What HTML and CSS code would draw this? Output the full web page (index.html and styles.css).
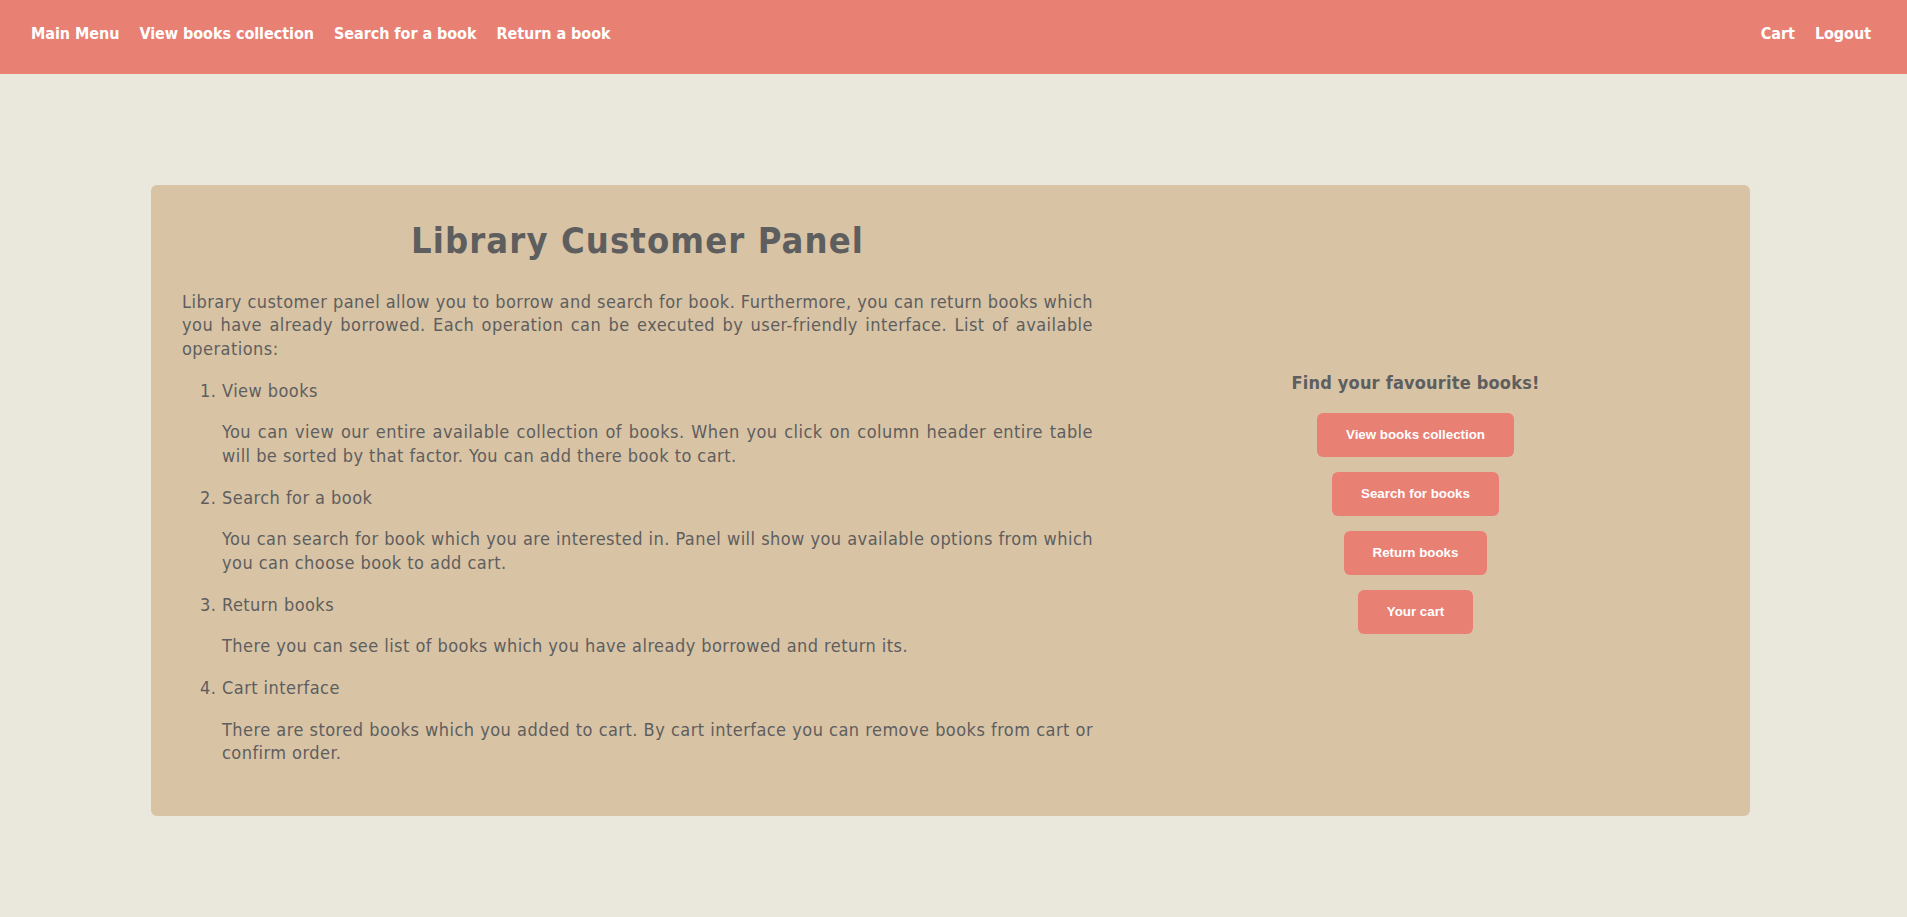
FILE: index.html
```html
<!DOCTYPE html>
<html lang="en">
<head>
<meta charset="utf-8">
<title>Library Customer Panel</title>
<link rel="stylesheet" href="styles.css">
</head>
<body>
<nav class="topnav">
  <ul class="nav-links">
    <li><a href="#">Main Menu</a></li>
    <li><a href="#">View books collection</a></li>
    <li><a href="#">Search for a book</a></li>
    <li><a href="#">Return a book</a></li>
  </ul>
  <ul class="nav-links">
    <li><a href="#">Cart</a></li>
    <li><a href="#">Logout</a></li>
  </ul>
</nav>
<main class="panel">
  <section class="info">
    <h1 class="title">Library Customer Panel</h1>
    <p class="intro">Library customer panel allow you to borrow and search for book. Furthermore, you can return books which you have already borrowed. Each operation can be executed by user-friendly interface. List of available operations:</p>
    <ol class="ops">
      <li>View books
        <p>You can view our entire available collection of books. When you click on column header entire table will be sorted by that factor. You can add there book to cart.</p>
      </li>
      <li>Search for a book
        <p>You can search for book which you are interested in. Panel will show you available options from which you can choose book to add cart.</p>
      </li>
      <li>Return books
        <p>There you can see list of books which you have already borrowed and return its.</p>
      </li>
      <li>Cart interface
        <p>There are stored books which you added to cart. By cart interface you can remove books from cart or confirm order.</p>
      </li>
    </ol>
  </section>
  <aside class="actions">
    <h2 class="actions-title">Find your favourite books!</h2>
    <button class="btn">View books collection</button>
    <button class="btn">Search for books</button>
    <button class="btn">Return books</button>
    <button class="btn">Your cart</button>
  </aside>
</main>
</body>
</html>
```

FILE: styles.css
```css
* { box-sizing: border-box; }

html, body {
  margin: 0;
  padding: 0;
}

body {
  background: #eae7dc;
  color: #5e5e5e;
  font-family: "DejaVu Sans Condensed", "DejaVu Sans", sans-serif;
  font-size: 18px;
  height: 917px;
  overflow: hidden;
}

.topnav {
  height: 74px;
  background: #e98074;
  display: flex;
  align-items: center;
  justify-content: space-between;
  padding: 0 36px 6px 31px;
}

.nav-links {
  list-style: none;
  margin: 0;
  padding: 0;
  display: flex;
  gap: 20px;
}

.nav-links a {
  color: #ffffff;
  text-decoration: none;
  font-weight: bold;
  font-size: 16px;
  line-height: 20px;
  letter-spacing: -0.05px;
  display: block;
}

.panel {
  width: 1599px;
  margin: 111px 0 0 151px;
  background: #d8c3a5;
  border-radius: 6px;
  padding: 34px 31px 32.5px 31px;
  display: grid;
  grid-template-columns: 911px 1fr;
  column-gap: 19px;
}

.info {
  line-height: 23.4px;
  letter-spacing: 0.45px;
}

.title {
  margin: 0 0 27px;
  font-size: 36px;
  line-height: 44px;
  letter-spacing: 1.1px;
  text-align: center;
  font-weight: bold;
}

.intro {
  margin: 0 0 18.4px;
  text-align: justify;
}

.ops {
  margin: 18.4px 0;
  padding-left: 40px;
}

.ops p {
  margin: 18.4px 0;
  text-align: justify;
}

.actions {
  display: flex;
  flex-direction: column;
  align-items: center;
  justify-content: center;
  gap: 15px;
  padding-top: 4px;
}

.actions-title {
  margin: 0 0 4px;
  font-size: 18px;
  line-height: 22px;
  letter-spacing: 0.2px;
  font-weight: bold;
}

.btn {
  background: #e98074;
  color: #ffffff;
  border: none;
  border-radius: 6px;
  font-family: "Liberation Sans", Arial, sans-serif;
  font-weight: bold;
  font-size: 13.33px;
  line-height: 16px;
  padding: 14px 29px;
  cursor: pointer;
}
```
